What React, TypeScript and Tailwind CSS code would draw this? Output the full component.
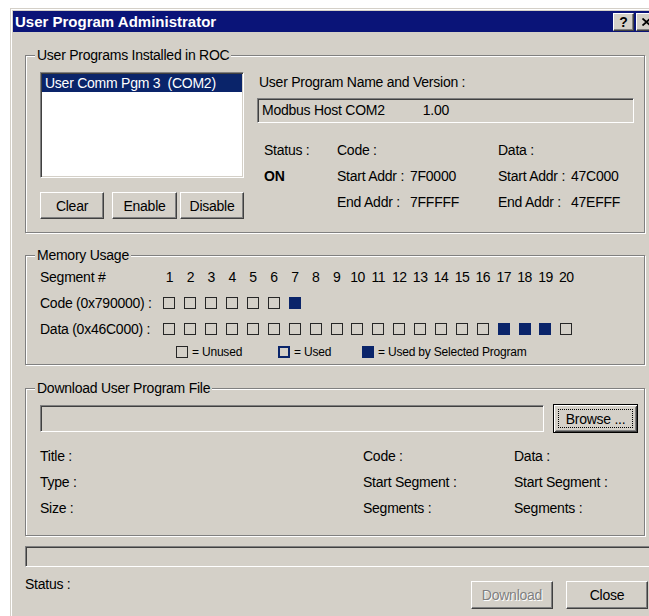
import React from "react";

const raised =
  "bg-[#d4d0c8] border border-t-white border-l-white border-r-[#404040] border-b-[#404040] shadow-[inset_-1px_-1px_#808080,inset_1px_1px_#d4d0c8]";
const defaultBtn =
  "bg-[#d4d0c8] border border-black shadow-[inset_1px_1px_#fff,inset_-1px_-1px_#404040,inset_2px_2px_#d4d0c8,inset_-2px_-2px_#808080]";
const sunken =
  "border border-t-[#808080] border-l-[#808080] border-r-white border-b-white shadow-[inset_1px_1px_#404040,inset_-1px_-1px_#d4d0c8]";
const etched = "border border-[#808080] shadow-[inset_1px_1px_#fff,1px_1px_#fff]";

function Group({
  title,
  className,
  children,
}: {
  title: string;
  className?: string;
  children: React.ReactNode;
}) {
  return (
    <fieldset className={`${etched} w-[620px] min-w-0 ${className ?? ""}`}>
      <legend className="ml-[9px] px-[2px] bg-[#d4d0c8] leading-[16px]">{title}</legend>
      {children}
    </fieldset>
  );
}

function Button({
  children,
  className,
  disabled,
}: {
  children: React.ReactNode;
  className?: string;
  disabled?: boolean;
}) {
  return (
    <div
      className={`${raised} flex items-center justify-center leading-none ${
        disabled ? "text-[#808080] [text-shadow:1px_1px_#fff]" : "text-black"
      } ${className ?? ""}`}
    >
      {children}
    </div>
  );
}

type Kind = "free" | "used" | "mine";

function Square({ kind }: { kind: Kind }) {
  if (kind === "mine") return <div className="w-[12px] h-[12px] bg-[#0a246a]" />;
  if (kind === "used") return <div className="w-[12px] h-[12px] border-2 border-[#0a246a]" />;
  return <div className="w-[12px] h-[12px] border border-[#262626]" />;
}

const segments = Array.from({ length: 20 }, (_, i) => i + 1);
const codeRow: Kind[] = ["free", "free", "free", "free", "free", "free", "mine"];
const dataRow: Kind[] = segments.map((n) => (n >= 17 && n <= 19 ? "mine" : "free"));

function SegmentRow({ label, cells }: { label: string; cells: Kind[] }) {
  return (
    <div className="flex items-center h-[26px]">
      <div className="w-[119px]">{label}</div>
      <div className="grid grid-cols-[repeat(20,20.9px)]">
        {cells.map((k, i) => (
          <div key={i} className="flex justify-center">
            <Square kind={k} />
          </div>
        ))}
      </div>
    </div>
  );
}

export default function App() {
  return (
    <div className="w-[649px] h-[616px] overflow-hidden bg-white pl-[10px] pt-[8px] text-[14px] tracking-[-0.25px] text-black [font-family:'Liberation_Sans',Arial,sans-serif]">
      <div className="w-[660px] h-[640px] bg-[#d4d0c8] border-l border-t border-[#d4d0c8] shadow-[inset_1px_1px_#fff] p-[2px]">
        {/* caption */}
        <div className="h-[21px] bg-[#0a1478] flex items-center pl-[2px] pr-[11px]">
          <span className="text-white font-bold text-[15px] tracking-normal leading-none">User Program Administrator</span>
          <div className="ml-auto flex gap-[2px]">
            <div className={`${raised} w-[21px] h-[18px] flex items-center justify-center font-bold text-[14px] leading-none`}>
              ?
            </div>
            <div className={`${raised} w-[21px] h-[18px] flex items-center justify-center`}>
              <svg width="9" height="8" viewBox="0 0 9 8">
                <path d="M0.5 0.5 L8.5 7.5 M8.5 0.5 L0.5 7.5" stroke="#000" strokeWidth="1.8" />
              </svg>
            </div>
          </div>
        </div>

        <div className="pl-[12px]">
          {/* installed programs */}
          <Group title="User Programs Installed in ROC" className="mt-[15px]">
            <div className="flex pl-[14px] pt-[9px] pb-[13px]">
              <div className="w-[204px]">
                <div className={`${sunken} bg-white h-[106px] p-[1px]`}>
                  <div className="h-[18px] bg-[#0a246a] text-white flex items-center pl-[3px] whitespace-pre">
                    User Comm Pgm 3  (COM2)
                  </div>
                </div>
                <div className="flex mt-[14px]">
                  <Button className="w-[64px] h-[27px]">Clear</Button>
                  <Button className="w-[65px] h-[27px] ml-[8px]">Enable</Button>
                  <Button className="w-[64px] h-[27px] ml-[3px]">Disable</Button>
                </div>
              </div>
              <div className="ml-[13px] w-[377px]">
                <div className="leading-[16px] mt-[2px] pl-[2px]">User Program Name and Version :</div>
                <div className={`${sunken} mt-[8px] h-[25px] flex items-center pl-[4px]`}>
                  <span>Modbus Host COM2</span>
                  <span className="ml-[38px]">1.00</span>
                </div>
                <div className="mt-[14px] ml-[7px] grid grid-cols-[73px_161px_1fr] auto-rows-[26px] items-center">
                  <div>Status :</div>
                  <div>Code :</div>
                  <div>Data :</div>
                  <div className="font-bold">ON</div>
                  <div className="flex">
                    <span className="w-[73px]">Start Addr :</span>
                    <span>7F0000</span>
                  </div>
                  <div className="flex">
                    <span className="w-[73px]">Start Addr :</span>
                    <span>47C000</span>
                  </div>
                  <div />
                  <div className="flex">
                    <span className="w-[73px]">End Addr :</span>
                    <span>7FFFFF</span>
                  </div>
                  <div className="flex">
                    <span className="w-[73px]">End Addr :</span>
                    <span>47EFFF</span>
                  </div>
                </div>
              </div>
            </div>
          </Group>

          {/* memory map */}
          <Group title="Memory Usage" className="mt-[14px]">
            <div className="pl-[14px] pt-[1px] pb-[4px]">
              <div className="flex items-center h-[26px]">
                <div className="w-[119px]">Segment #</div>
                <div className="grid grid-cols-[repeat(20,20.9px)]">
                  {segments.map((n) => (
                    <div key={n} className="text-center tracking-[-0.5px]">
                      {n}
                    </div>
                  ))}
                </div>
              </div>
              <SegmentRow label="Code (0x790000) :" cells={codeRow} />
              <SegmentRow label="Data (0x46C000) :" cells={dataRow} />
              <div className="flex items-center h-[16px] mt-[2px] pl-[136px] text-[12px] tracking-[-0.2px]">
                <div className="w-[102px] flex items-center gap-[4px]">
                  <Square kind="free" />
                  <span>= Unused</span>
                </div>
                <div className="w-[84px] flex items-center gap-[4px]">
                  <Square kind="used" />
                  <span>= Used</span>
                </div>
                <div className="flex items-center gap-[4px]">
                  <Square kind="mine" />
                  <span>= Used by Selected Program</span>
                </div>
              </div>
            </div>
          </Group>

          {/* download */}
          <Group title="Download User Program File" className="mt-[15px]">
            <div className="pl-[14px] pt-[8px] pb-[14px]">
              <div className="flex items-start">
                <div className={`${sunken} w-[504px] h-[27px] mt-[1px]`} />
                <div className={`${defaultBtn} ml-[9px] w-[85px] h-[29px] flex p-[4px]`}>
                  <span className="flex-1 border border-dotted border-black flex items-center justify-center leading-none">
                    Browse ...
                  </span>
                </div>
              </div>
              <div className="mt-[10px] grid grid-cols-[323px_151px_1fr] auto-rows-[26px] items-center">
                <div>Title :</div>
                <div>Code :</div>
                <div>Data :</div>
                <div>Type :</div>
                <div>Start Segment :</div>
                <div>Start Segment :</div>
                <div>Size :</div>
                <div>Segments :</div>
                <div>Segments :</div>
              </div>
            </div>
          </Group>

          <div className={`${sunken} mt-[10px] w-[640px] h-[21px]`} />

          <div className="flex items-start w-[623px] mt-[9px]">
            <div className="leading-[16px]">Status :</div>
            <div className="ml-auto mt-[5px] flex gap-[13px]">
              <Button disabled className="w-[82px] h-[28px]">
                Download
              </Button>
              <Button className="w-[82px] h-[28px]">Close</Button>
            </div>
          </div>
        </div>
      </div>
    </div>
  );
}
